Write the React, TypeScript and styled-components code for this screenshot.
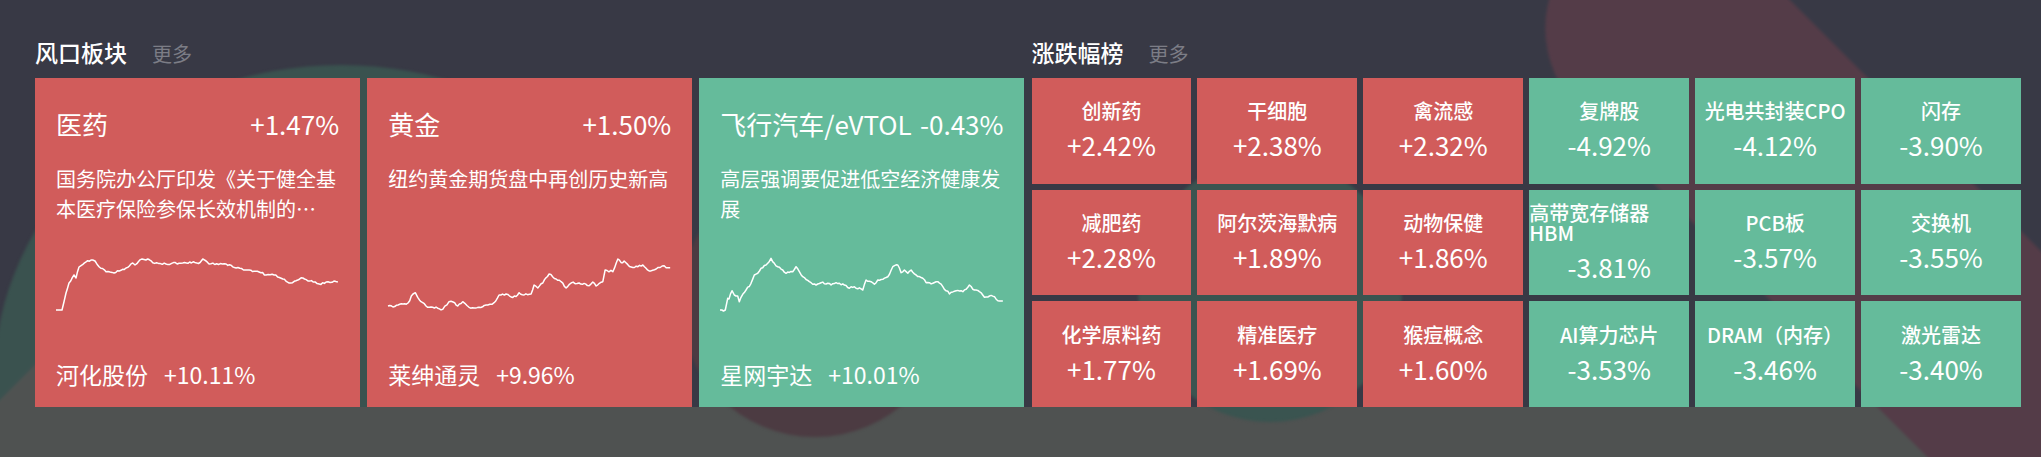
import React from 'react';
import styled, { createGlobalStyle } from 'styled-components';

type Tone = 'up' | 'down';

type Hot = {
  name: string;
  change: string;
  summary: string;
  leader: string;
  leaderChange: string;
  tone: Tone;
  line: number[][];
  seed: number;
};

type Mover = { name: string; change: string };

const RED = '#d15c5b';
const GREEN = '#65bb9b';

const hotSectors: Hot[] = [
  {
    name: '医药',
    change: '+1.47%',
    summary: '国务院办公厅印发《关于健全基本医疗保险参保长效机制的…',
    leader: '河化股份',
    leaderChange: '+10.11%',
    tone: 'up',
    seed: 11,
    line: [
      [0, 54], [6, 54], [10, 37], [13, 27], [18, 19], [20, 22], [23, 11], [31.7, 4.7], [36.7, 4], [39, 5],
      [43, 10.7], [50, 15.7], [58, 17], [70, 12], [76.7, 7], [79, 9], [86, 3], [91.7, 3], [96.7, 6.7],
      [110, 8], [126.7, 7], [144, 6.5], [146.7, 3], [150, 5], [153, 8], [170, 8], [180, 12], [193, 14],
      [203, 16], [210, 19], [218, 19], [226.7, 23], [233, 27], [246.7, 22], [257, 26], [263, 28],
      [270, 26], [281.7, 26],
    ],
  },
  {
    name: '黄金',
    change: '+1.50%',
    summary: '纽约黄金期货盘中再创历史新高',
    leader: '莱绅通灵',
    leaderChange: '+9.96%',
    tone: 'up',
    seed: 23,
    line: [
      [0, 50], [5, 51], [10, 49], [15, 48], [20, 47], [25, 38], [27.3, 36.7], [29.7, 41.3], [33, 45.7],
      [38, 50], [44.7, 51.3], [54.7, 53.3], [61, 45.7], [65, 46], [69.7, 50], [74.7, 45.7], [81, 51.3],
      [91, 51.3], [99.7, 49], [106, 46.7], [111, 39], [118, 38], [123, 41], [128, 40.5], [131, 36.7],
      [136, 39], [143, 38], [146, 29], [149.7, 32], [154.7, 27], [161, 18], [168, 23], [173, 25.7],
      [178, 32], [183, 27], [191, 27], [201, 29.7], [204.7, 26], [208, 30], [214.7, 25.7], [217, 14],
      [224.7, 15.7], [229.7, 3], [233, 6.7], [236, 5], [243, 11], [249.7, 10.7], [254.7, 9], [261, 15],
      [268, 13], [274, 10], [282, 11.7],
    ],
  },
  {
    name: '飞行汽车/eVTOL',
    change: '-0.43%',
    summary: '高层强调要促进低空经济健康发展',
    leader: '星网宇达',
    leaderChange: '+10.01%',
    tone: 'down',
    seed: 37,
    line: [
      [0, 54], [5.3, 54], [7.7, 42.3], [9, 43], [12, 34.7], [14.3, 39], [17.7, 40], [19.3, 45.7], [21, 41.3],
      [26, 34], [31, 27.3], [34.3, 19], [37.7, 17.3], [41, 12.3], [46, 9], [51, 2.3], [54.3, 7.3],
      [57.7, 10.7], [62.7, 14], [66, 17.3], [72.7, 15.7], [76, 10.7], [79.3, 15.7], [82.7, 20.7],
      [89.3, 25.7], [96, 29], [101, 26.7], [107.7, 27.3], [111, 29], [116, 26.7], [124.3, 29],
      [129.3, 32.3], [134.3, 30.7], [142.7, 34], [146, 24], [151, 25.7], [154.3, 28.3], [157.7, 24],
      [162.7, 23.3], [167.7, 20.7], [172.7, 10.7], [177.7, 9], [181, 16.7], [184.3, 14], [187.7, 17.3],
      [191, 14], [196, 19], [202.7, 22.3], [206, 26.7], [212.7, 27.3], [217.7, 25.7], [222.7, 30.7],
      [229.3, 38], [236, 34.7], [242.7, 35.7], [249.3, 29], [254.3, 34], [259.3, 35.7], [264.3, 41.3],
      [269.3, 40], [274.3, 40.7], [277.7, 44.7], [282.7, 45],
    ],
  },
];

const gainers: Mover[] = [
  { name: '创新药', change: '+2.42%' },
  { name: '干细胞', change: '+2.38%' },
  { name: '禽流感', change: '+2.32%' },
  { name: '减肥药', change: '+2.28%' },
  { name: '阿尔茨海默病', change: '+1.89%' },
  { name: '动物保健', change: '+1.86%' },
  { name: '化学原料药', change: '+1.77%' },
  { name: '精准医疗', change: '+1.69%' },
  { name: '猴痘概念', change: '+1.60%' },
];

const losers: Mover[] = [
  { name: '复牌股', change: '-4.92%' },
  { name: '光电共封装CPO', change: '-4.12%' },
  { name: '闪存', change: '-3.90%' },
  { name: '高带宽存储器HBM', change: '-3.81%' },
  { name: 'PCB板', change: '-3.57%' },
  { name: '交换机', change: '-3.55%' },
  { name: 'AI算力芯片', change: '-3.53%' },
  { name: 'DRAM（内存）', change: '-3.46%' },
  { name: '激光雷达', change: '-3.40%' },
];

// small seeded rng so the sparkline wiggle is stable between renders
const rng = (seed: number) => {
  let a = seed;
  return () => {
    a = (a + 0x6d2b79f5) | 0;
    let t = Math.imul(a ^ (a >>> 15), 1 | a);
    t = (t + Math.imul(t ^ (t >>> 7), 61 | t)) ^ t;
    return ((t ^ (t >>> 14)) >>> 0) / 4294967296;
  };
};

const toPoints = (keys: number[][], seed: number) => {
  const rand = rng(seed);
  const out: string[] = [];
  for (let i = 0; i < keys.length - 1; i++) {
    const [x0, y0] = keys[i];
    const [x1, y1] = keys[i + 1];
    const steps = Math.max(1, Math.round((x1 - x0) / 1.8));
    for (let s = 0; s < steps; s++) {
      const t = s / steps;
      const wiggle = s === 0 ? 0 : (rand() - 0.5) * 2;
      out.push(`${(x0 + (x1 - x0) * t).toFixed(1)},${(y0 + (y1 - y0) * t + wiggle).toFixed(1)}`);
    }
  }
  const [lx, ly] = keys[keys.length - 1];
  out.push(`${lx},${ly}`);
  return out.join(' ');
};

const App: React.FC = () => (
  <>
    <GlobalStyle />
    <Page>
      <Blob $x={-6} $y={65} $w={694} $h={630} $color="#3a524f" $z={0} />
      <Diamond />
      <Floor />
      <Blob $x={680} $y={167} $w={270} $h={270} $color="#4c3b42" $z={1} />
      <Blob $x={1138} $y={158} $w={264} $h={264} $color="#3a5450" $z={1} />
      <Streak />

      <Columns>
        <Section>
          <Heading>
            <HeadingTitle>风口板块</HeadingTitle>
            <More>更多</More>
          </Heading>
          <CardGrid>
            {hotSectors.map((item) => (
              <Card key={item.name} $tone={item.tone}>
                <CardHead>
                  <span>{item.name}</span>
                  <span>{item.change}</span>
                </CardHead>
                <Summary>{item.summary}</Summary>
                <Spark viewBox="0 0 283 56" preserveAspectRatio="none">
                  <polyline
                    points={toPoints(item.line, item.seed)}
                    fill="none"
                    stroke="#fff"
                    strokeWidth={1.5}
                    strokeLinejoin="round"
                  />
                </Spark>
                <Leader>
                  <span>{item.leader}</span>
                  <LeaderChange>{item.leaderChange}</LeaderChange>
                </Leader>
              </Card>
            ))}
          </CardGrid>
        </Section>

        <Section>
          <Heading>
            <HeadingTitle>涨跌幅榜</HeadingTitle>
            <More>更多</More>
          </Heading>
          <Boards>
            <TileGrid>
              {gainers.map((m) => (
                <Tile key={m.name} $tone="up">
                  <TileName>{m.name}</TileName>
                  <TileChange>{m.change}</TileChange>
                </Tile>
              ))}
            </TileGrid>
            <TileGrid>
              {losers.map((m) => (
                <Tile key={m.name} $tone="down">
                  <TileName>{m.name}</TileName>
                  <TileChange>{m.change}</TileChange>
                </Tile>
              ))}
            </TileGrid>
          </Boards>
        </Section>
      </Columns>
    </Page>
  </>
);

const GlobalStyle = createGlobalStyle`
  html, body {
    margin: 0;
    padding: 0;
    background: #383945;
  }

  body {
    font-family: "Noto Sans CJK SC", "Noto Sans", sans-serif;
    color: #fff;
  }
`;

const Page = styled.div`
  position: relative;
  z-index: 0;
  overflow: hidden;
  display: flex;
  flex-direction: column;
  height: 100vh;
  padding: 37px 20px 0 35px;
  box-sizing: border-box;
  background: #383945;
`;

const Blob = styled.div<{ $x: number; $y: number; $w: number; $h: number; $color: string; $z: number }>`
  position: absolute;
  left: ${({ $x }) => `${$x}px`};
  top: ${({ $y }) => `${$y}px`};
  width: ${({ $w }) => `${$w}px`};
  height: ${({ $h }) => `${$h}px`};
  border-radius: 50%;
  background: ${({ $color }) => $color};
  z-index: ${({ $z }) => $z};
  filter: blur(1.5px);
`;

const Diamond = styled.div`
  position: absolute;
  left: -27px;
  top: 323px;
  width: 354px;
  height: 354px;
  background: #4f5251;
  transform: rotate(45deg);
  z-index: 0;
  filter: blur(1.5px);
`;

/* long rounded band running from the top edge down to the bottom right */
const Streak = styled.div`
  position: absolute;
  left: 1819px;
  top: -198px;
  width: 226px;
  height: 1000px;
  border-radius: 113px;
  background: #543c48;
  transform: rotate(-45deg);
  z-index: 1;
  filter: blur(1.5px);
`;

const Floor = styled.div`
  position: relative;
  z-index: 0;
  flex: 1;
  order: 2;
  margin: 0 -20px 0 -35px;
  background: #4f5251;
`;

const Columns = styled.div`
  position: relative;
  z-index: 2;
  order: 1;
  display: grid;
  grid-template-columns: 1fr 1fr;
  column-gap: 7px;
`;

const Section = styled.section`
  display: flex;
  flex-direction: column;
  min-width: 0;
`;

const Heading = styled.div`
  display: flex;
  align-items: baseline;
  height: 30px;
  margin-bottom: 11px;
`;

const HeadingTitle = styled.h2`
  margin: 0;
  font-size: 23px;
  line-height: 30px;
  font-weight: 500;
  color: #fff;
`;

const More = styled.span`
  margin-left: 25px;
  font-size: 20px;
  line-height: 30px;
  color: #7c7d86;
`;

const CardGrid = styled.div`
  display: grid;
  grid-template-columns: repeat(3, 1fr);
  column-gap: 7px;
`;

const Card = styled.div<{ $tone: Tone }>`
  display: flex;
  flex-direction: column;
  height: 329px;
  padding: 28px 21px 18px;
  box-sizing: border-box;
  background: ${({ $tone }) => ($tone === 'up' ? RED : GREEN)};
  color: #fff;
`;

const CardHead = styled.div`
  display: flex;
  justify-content: space-between;
  font-size: 26px;
  line-height: 36px;
  white-space: nowrap;
`;

const Summary = styled.p`
  margin: 22px 0 0;
  height: 60px;
  overflow: hidden;
  font-size: 20px;
  line-height: 30px;
`;

const Spark = styled.svg`
  display: block;
  width: 100%;
  height: 56px;
  margin-top: 32px;
  overflow: visible;
`;

const Leader = styled.div`
  display: flex;
  align-items: baseline;
  margin-top: auto;
  font-size: 23px;
  line-height: 30px;
  white-space: nowrap;
`;

const LeaderChange = styled.span`
  margin-left: 16px;
`;

const Boards = styled.div`
  flex: 1;
  display: grid;
  grid-template-columns: 1fr 1fr;
  column-gap: 6px;
`;

const TileGrid = styled.div`
  display: grid;
  grid-template-columns: repeat(3, 1fr);
  grid-template-rows: repeat(3, 1fr);
  gap: 6px;
`;

const Tile = styled.div<{ $tone: Tone }>`
  display: flex;
  flex-direction: column;
  align-items: center;
  justify-content: center;
  min-width: 0;
  background: ${({ $tone }) => ($tone === 'up' ? RED : GREEN)};
  color: #fff;
`;

const TileName = styled.div`
  font-size: 20px;
  line-height: 20px;
  font-weight: 500;
`;

const TileChange = styled.div`
  margin-top: 9px;
  font-size: 26px;
  line-height: 30px;
`;

export default App;
